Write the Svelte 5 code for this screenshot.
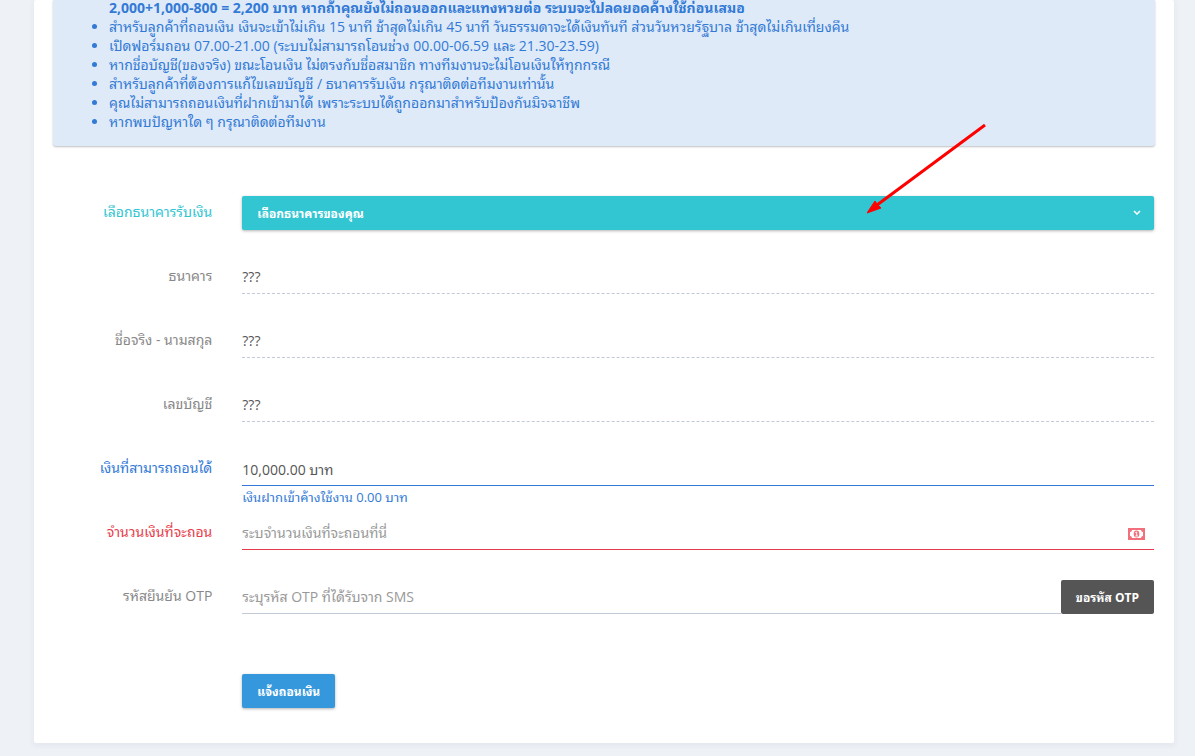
<script>
  let amount = $state('');
  let otp = $state('');
  let bank = $state('');

  const rules = [
    'สำหรับลูกค้าที่ถอนเงิน เงินจะเข้าไม่เกิน 15 นาที ช้าสุดไม่เกิน 45 นาที วันธรรมดาจะได้เงินทันที ส่วนวันหวยรัฐบาล ช้าสุดไม่เกินเที่ยงคืน',
    'เปิดฟอร์มถอน 07.00-21.00 (ระบบไม่สามารถโอนช่วง 00.00-06.59 และ 21.30-23.59)',
    'หากชื่อบัญชี(ของจริง) ขณะโอนเงิน ไม่ตรงกับชื่อสมาชิก ทางทีมงานจะไม่โอนเงินให้ทุกกรณี',
    'สำหรับลูกค้าที่ต้องการแก้ไขเลขบัญชี / ธนาคารรับเงิน กรุณาติดต่อทีมงานเท่านั้น',
    'คุณไม่สามารถถอนเงินที่ฝากเข้ามาได้ เพราะระบบได้ถูกออกมาสำหรับป้องกันมิจฉาชีพ',
    'หากพบปัญหาใด ๆ กรุณาติดต่อทีมงาน'
  ];

  const account = [
    { id: 'bank_name', label: 'ธนาคาร', value: '???' },
    { id: 'full_name', label: 'ชื่อจริง - นามสกุล', value: '???' },
    { id: 'account_no', label: 'เลขบัญชี', value: '???' }
  ];

  function submit(event) {
    event.preventDefault();
  }
</script>

<main class="portlet">
  <div class="note">
    <ul>
      <li class="total">2,000+1,000-800 = 2,200 บาท หากถ้าคุณยังไม่ถอนออกและแทงหวยต่อ ระบบจะไปลดยอดค้างใช้ก่อนเสมอ</li>
      {#each rules as rule}
        <li>{rule}</li>
      {/each}
    </ul>
  </div>

  <form onsubmit={submit}>
    <div class="row teal">
      <label for="bank">เลือกธนาคารรับเงิน</label>
      <div class="field">
        <select id="bank" bind:value={bank}>
          <option value="">เลือกธนาคารของคุณ</option>
        </select>
        <svg class="chevron" viewBox="0 0 8 5" aria-hidden="true">
          <path d="M1 1 L4 4 L7 1" fill="none" stroke="#fff" stroke-width="1.5" />
        </svg>
        <svg class="arrow" viewBox="0 0 120 90" aria-hidden="true">
          <path d="M118 1 L10 81" fill="none" stroke="#f00" stroke-width="3" />
          <path d="M0 89 L8 77 L10 80 L14 84 Z" fill="#f00" stroke="#f00" />
        </svg>
      </div>
    </div>

    {#each account as item}
      <div class="row">
        <label for={item.id}>{item.label}</label>
        <div class="field">
          <input class="static" id={item.id} value={item.value} readonly />
        </div>
      </div>
    {/each}

    <div class="row blue">
      <label for="balance">เงินที่สามารถถอนได้</label>
      <div class="field">
        <input id="balance" value="10,000.00 บาท" readonly />
        <span class="help">เงินฝากเข้าค้างใช้งาน 0.00 บาท</span>
      </div>
    </div>

    <div class="row red">
      <label for="amount">จำนวนเงินที่จะถอน</label>
      <div class="field">
        <input id="amount" bind:value={amount} placeholder="ระบจำนวนเงินที่จะถอนที่นี่" />
        <svg class="money" viewBox="0 0 17 12" aria-hidden="true">
          <rect width="17" height="12" fill="#f1707c" />
          <path d="M4 2 H13 Q13 4 15 4 V8 Q13 8 13 10 H4 Q4 8 2 8 V4 Q4 4 4 2 Z" fill="#fff" />
          <ellipse cx="8.5" cy="6" rx="2.8" ry="3.4" fill="#f1707c" />
          <path d="M7.3 4.7 L8.7 4 V8 M7.3 8 H10" fill="none" stroke="#fff" stroke-width="0.9" />
        </svg>
      </div>
    </div>

    <div class="row">
      <label for="otp">รหัสยืนยัน OTP</label>
      <div class="field group">
        <input id="otp" bind:value={otp} placeholder="ระบุรหัส OTP ที่ได้รับจาก SMS" />
        <button type="button" class="dark">ขอรหัส OTP</button>
      </div>
    </div>

    <div class="actions">
      <button type="submit" class="primary">แจ้งถอนเงิน</button>
    </div>
  </form>
</main>

<style>
:global(body) {
  background: #eef1f6;
  overflow: hidden;
}

.portlet {
  margin: 0 21px 13px 34px;
  padding: 0 19px 35px;
  background: #fff;
  border-radius: 2px;
  box-shadow: 0 2px 4px 2px rgba(58, 70, 90, 0.04);
  color: #555;
  font-family: "Open Sans", "Noto Sans Thai Looped", Tahoma, sans-serif;
  font-size: 14px;
  line-height: 19px;
}

.note {
  padding-bottom: 15px;
  background: #dfeaf8;
  border-radius: 0 0 3px 3px;
  box-shadow: 0 1px 2px rgba(0, 0, 0, 0.25);
  color: #327ad5;
}

ul {
  margin: 0;
  padding: 0 15px 0 56px;
}

li {
  height: 19px;
  white-space: nowrap;
}

.total {
  margin-top: -2px;
  font-weight: bold;
  list-style: none;
}

.note,
form {
  display: flow-root;
}

form {
  margin: 50px -14px 0;
}

.row {
  display: grid;
  grid-template-columns: 2fr 10fr;
  height: 34px;
  margin-bottom: 30px;
}

label {
  padding: 6px 15px 0;
  color: #888;
  text-align: right;
  white-space: nowrap;
}

.field {
  position: relative;
  padding: 0 15px;
}

input {
  box-sizing: border-box;
  width: 100%;
  height: 34px;
  padding: 0;
  border: 0;
  border-bottom: 1px solid #c2cad8;
  outline: 0;
  background: transparent;
  color: #555;
  font: inherit;
}

input::placeholder {
  color: #999;
}

.static {
  border-bottom: 1px dashed #c2cad8;
}

select {
  appearance: none;
  width: 100%;
  height: 34px;
  padding: 0 15px;
  border: 0;
  border-radius: 2px;
  background: #32c5d2;
  box-shadow: 0 1px 3px rgba(0, 0, 0, 0.3);
  color: #fff;
  font: inherit;
  font-size: 12px;
  font-weight: bold;
}

.chevron {
  position: absolute;
  top: 14px;
  right: 28px;
  width: 8px;
  height: 5px;
}

.arrow {
  position: absolute;
  right: 182px;
  bottom: 16px;
  width: 120px;
  height: 90px;
  pointer-events: none;
}

.teal label {
  color: #32c5d2;
}

.blue label,
.help {
  color: #327ad5;
}

.blue input {
  border-color: #327ad5;
}

.red label {
  color: #e73d4a;
}

.red input {
  border-color: #e73d4a;
}

.help {
  display: block;
  margin-top: 2px;
  font-size: 13px;
}

.money {
  position: absolute;
  top: 12px;
  right: 24px;
  width: 17px;
  height: 12px;
}

.group {
  display: flex;
}

.group input {
  flex: 1;
  min-width: 0;
}

button {
  height: 34px;
  padding: 0 15px;
  border: 0;
  border-radius: 2px;
  color: #fff;
  font: inherit;
  font-size: 12px;
  font-weight: bold;
  white-space: nowrap;
  cursor: pointer;
}

.dark {
  background: #555;
}

.primary {
  background: #3598dc;
  box-shadow: 0 1px 3px rgba(0, 0, 0, 0.3);
}

.actions {
  display: grid;
  grid-template-columns: 2fr 10fr;
  padding-top: 30px;
}

.actions button {
  grid-column: 2;
  justify-self: start;
  margin-left: 15px;
}
</style>
